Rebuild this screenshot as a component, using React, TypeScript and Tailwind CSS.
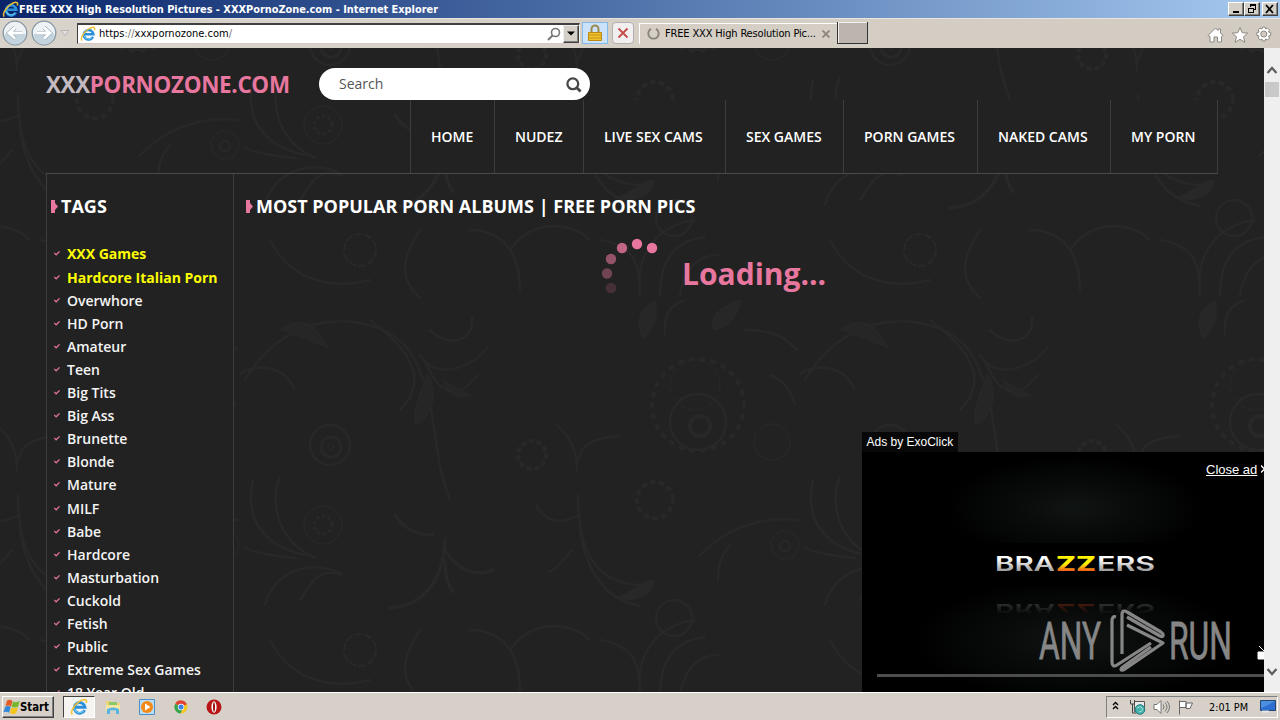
// src/App.tsx - Purpose: desktop with a browser window, the site page and the taskbar
import type { ReactNode } from "react";

const navItems = [
  { label: "HOME", width: "w-[84px]" },
  { label: "NUDEZ", width: "w-[89px]" },
  { label: "LIVE SEX CAMS", width: "w-[142px]" },
  { label: "SEX GAMES", width: "w-[118px]" },
  { label: "PORN GAMES", width: "w-[134px]" },
  { label: "NAKED CAMS", width: "w-[133px]" },
  { label: "MY PORN", width: "w-[108px] border-r" },
];

const tags = [
  "XXX Games",
  "Hardcore Italian Porn",
  "Overwhore",
  "HD Porn",
  "Amateur",
  "Teen",
  "Big Tits",
  "Big Ass",
  "Brunette",
  "Blonde",
  "Mature",
  "MILF",
  "Babe",
  "Hardcore",
  "Masturbation",
  "Cuckold",
  "Fetish",
  "Public",
  "Extreme Sex Games",
  "18 Year Old",
];

function IeLogo({ size }: { size: number }) {
  return (
    <svg width={size} height={size} viewBox="0 0 16 16" fill="none" className="shrink-0">
      <path d="M13 10.800A4.800 4.800 0 1 1 13.400 8.200H4.500" stroke="#2b8fd9" strokeWidth="2.500" />
      <path d="M12 11.500A4.600 4.600 0 0 1 4 9.500" stroke="#6fcbf5" strokeWidth="1" />
      <path d="M2.200 14.600C-.6 13 4.300 5.500 8.500 3 12 .8 15.600.2 14.500 4.300" stroke="#f2c230" strokeWidth="1.400" />
    </svg>
  );
}

function CaptionButton({ children }: { children: ReactNode }) {
  return (
    <div className="flex h-[14px] w-4 items-center justify-center border border-t-white border-l-white border-r-[#404040] border-b-[#404040] bg-[#d4d0c8] shadow-[inset_-1px_-1px_0_#808080]">
      <svg width="14" height="12" viewBox="0 0 14 12" fill="none" stroke="#000" shapeRendering="crispEdges" className="shrink-0">
        {children}
      </svg>
    </div>
  );
}

function TitleBar() {
  return (
    <div className="flex h-[18px] items-center bg-linear-to-r from-[#0a246a] to-[#a6caf0] pr-0.5 pl-0.5">
      <IeLogo size={17} />
      <svg width="430" height="18" className="shrink-0">
        <text x="0" y="13" textLength="419" lengthAdjust="spacingAndGlyphs" fill="#fff" className="font-['DejaVu_Sans_Condensed','DejaVu_Sans',sans-serif] text-[11px] font-bold">
          FREE XXX High Resolution Pictures - XXXPornoZone.com - Internet Explorer
        </text>
      </svg>
      <div className="ml-auto flex">
        <CaptionButton>
          <path d="M4 9h6" strokeWidth="2" />
        </CaptionButton>
        <CaptionButton>
          <path d="M5.500 4V1.500h5v5H9M5 2h6M3.500 5.500h5v4h-5zM3 5h6" />
        </CaptionButton>
        <div className="ml-0.5">
          <CaptionButton>
            <path d="M3 2l7 8M10 2l-7 8" strokeWidth="1.800" shapeRendering="auto" />
          </CaptionButton>
        </div>
      </div>
    </div>
  );
}

function HistoryButton({ back }: { back?: boolean }) {
  return (
    <svg width="26" height="26" viewBox="0 0 26 26" fill="none" className={back ? "" : "-scale-x-100"}>
      <circle cx="13" cy="13" r="11.800" fill="#eef2f5" stroke="#8495a4" strokeWidth="1.300" />
      <path d="M2.500 14a10.500 10.500 0 0 0 21 0z" fill="#c3d4df" />
      <path d="M20 13H8M13 7.500L7 13l6 5.500" stroke="#93a4b3" strokeWidth="4.200" />
      <path d="M20 13H8M13 7.500L7 13l6 5.500" stroke="#fff" strokeWidth="3" />
    </svg>
  );
}

function Toolbar() {
  return (
    <div className="flex h-[30px] items-center border-t border-[#e8e4de] bg-linear-to-r from-[#d8d3cb] to-[#d2cbc1] pb-px">
      <div className="flex w-[77px] items-center gap-[3px] pl-0.5">
        <HistoryButton back />
        <HistoryButton />
        <svg width="10" height="8" viewBox="0 0 10 8">
          <path d="M1 1.500h8L5 6.500z" fill="#e5e1e1" stroke="#bbb2b5" />
        </svg>
      </div>
      <div className="flex h-[21px] w-[503px] items-center border border-t-2 border-t-[#404040] border-l-[#404040] border-r-[#f5f3ef] border-b-[#d8c8c8] bg-white pl-0.5">
        <IeLogo size={16} />
        <svg width="150" height="17" className="ml-0.5">
          <text x="1" y="12" textLength="133" className="font-['DejaVu_Sans_Condensed','DejaVu_Sans',sans-serif] text-[11px]">
            <tspan fill="#000">https</tspan>
            <tspan fill="#777">://</tspan>
            <tspan fill="#000">xxxpornozone.com</tspan>
            <tspan fill="#777">/</tspan>
          </text>
        </svg>
        <svg width="14" height="14" viewBox="0 0 14 14" fill="none" stroke="#777" className="mr-0 ml-auto">
          <circle cx="8.500" cy="5.500" r="4" strokeWidth="1.600" />
          <path d="M5.500 8.500L1 13" strokeWidth="2" />
        </svg>
        <div className="ml-0.5 flex h-[18px] w-4 items-center justify-center border border-t-[#eee] border-l-[#eee] border-r-[#404040] border-b-[#404040] bg-[#d4d0c8] shadow-[inset_-1px_-1px_0_#808080]">
          <svg width="8" height="5" viewBox="0 0 8 5">
            <path d="M0 .5h8L4 4.500z" />
          </svg>
        </div>
      </div>
      <div className="ml-[2px] flex h-[22px] w-[26px] items-center justify-center border border-[#83b8ea] bg-[#cbe2fa]">
        <svg width="14" height="18" viewBox="0 0 14 18" fill="none">
          <path d="M3.500 9V5a3.500 3.500 0 0 1 7 0v4" stroke="#9c8a50" strokeWidth="2" />
          <path d="M.5 8.500h13v8H.5z" fill="#f0bf2a" stroke="#b98a14" />
          <path d="M1 11h12M1 14h12" stroke="#c2981c" />
        </svg>
      </div>
      <div className="ml-1 flex h-[22px] w-[22px] items-center justify-center rounded-sm border border-[#b3aeb0] bg-[#f2eff0]">
        <svg width="12" height="12" viewBox="0 0 12 12" stroke="#c34b48" strokeWidth="1.800">
          <path d="M1.500 1.500l9 9M10.500 1.500l-9 9" />
        </svg>
      </div>
      <div className="ml-[5px] flex h-[21px] w-[198px] items-center border-t border-l border-white pl-[7px]">
        <svg width="13" height="13" viewBox="0 0 13 13" fill="none" stroke="#8b857b" strokeWidth="1.900">
          <path d="M4 1.900a5.200 5.200 0 1 0 5 0" />
        </svg>
        <svg width="154" height="17" className="ml-[5px]">
          <text x="0" y="12" textLength="151" fill="#000" className="font-['DejaVu_Sans_Condensed','DejaVu_Sans',sans-serif] text-[11px]">
            FREE XXX High Resolution Pic...
          </text>
        </svg>
        <svg width="8" height="8" viewBox="0 0 8 8" stroke="#8b857b" strokeWidth="1.800" className="ml-[3px]">
          <path d="M.5.5l7 7M7.500.5l-7 7" />
        </svg>
      </div>
      <div className="h-[22px] w-[31px] border-r border-b border-l border-[#333] bg-[#bcb4ad] shadow-[inset_1px_1px_0_#f4f0ec]" />
      <svg width="66" height="18" viewBox="0 0 66 18" fill="#fff" stroke="#8d8984" className="mt-1 mr-[7px] ml-auto">
        <path d="M1 9.500L8.500 2l2.500 2.500V3h2.500v4l2.500 2.500-1.500 1V16h-4v-5h-3.500v5H3v-5.500z" />
        <path d="M33 1.500l2.200 5.200 5.600.4-4.300 3.700 1.400 5.500-4.900-3-4.900 3 1.400-5.500-4.300-3.700 5.600-.4z" />
        <path d="M55.500 1h2.600l.5 2 1.900-1 2 2-1 2 2.200.6v2.800l-2.200.6 1 2-2 2-1.900-1-.5 2h-2.600l-.5-2-2 1-1.900-2 1-2-2.300-.6V6.600l2.300-.6-1-2 1.900-2 2 1z" />
        <circle cx="56.800" cy="8" r="3" fill="#d2cbc1" />
      </svg>
    </div>
  );
}

// Faint floral wallpaper behind the page
function FloralBackdrop() {
  return (
    <svg width="1264" height="644" className="absolute inset-0" fill="none" stroke="#282828" strokeLinecap="round">
      <defs>
        <pattern id="floral" width="560" height="400" x="240" y="252" patternUnits="userSpaceOnUse">
          <path d="M5 80C50 0 150 10 175 60s15 90 35 140M130 20c40 30 60 60 30 90M180 55c15 25 50 15 68-8M185 60c15 40 35 38 53 15M190 30c20 20 45 10 42-13" strokeWidth="2" />
          <path d="M188 75c-10 20-16 44-12 50 16-8 22-30 12-50zM40 30c30-20 40 5 48 18M203 80c8 20 20 18 28 15" fill="#262626" />
          <circle cx="90" cy="145" r="20" strokeWidth="2" />
          <circle cx="91" cy="147" r="10" strokeDasharray="4 3" strokeWidth="3" />
          <circle cx="91" cy="147" r="3" />
          <circle cx="83" cy="225" r="19" />
          <circle cx="83" cy="225" r="9" strokeDasharray="1 5" strokeWidth="3" />
          <path d="M0 74c20-12 45-7 54 15M75 258c-40-18-45-60-35-80M65 255c-46-10-60-40-52-75M55 258c-40-4-50-10-50-10M25 305c10-35 45-45 75-32M60 300c20-35 30-27 42-25" strokeWidth="2" />
          <g transform="translate(22 0)">
            <path d="M315 170c0-28-14-38-20-45M316 160c6-20 20-22 40-24M316 195c0 60 20 90 65 90M318 230c8 50 30 70 60 76M316 215c-20 12-35 4-42-10M310 250c-10 10-15 20-24 22" strokeWidth="2" />
            <path d="M355 298c15 4 35 0 37-18-8 0-24 13-37 18z" fill="#282828" />
          </g>
          <path d="M205 240c-2 40-20 65-55 68M205 250c15 25 35 25 48 20M205 260c0 20 4 26 8 32M155 215c8 12 20 20 38 20" strokeWidth="3" />
          <circle cx="458" cy="122" r="28" strokeWidth="2" />
          <circle cx="460" cy="126" r="10" strokeDasharray="3 3" strokeWidth="4" />
          <circle cx="458" cy="105" r="46" strokeDasharray="2 9" strokeWidth="4" />
          <circle cx="455" cy="85" r="25" strokeDasharray="6 4" />
          <path d="M415 2c-15 5-20 20-12 36 10-8 16-20 12-36zM500 0c-15 5-32 14-26 30 14-3 24-12 26-30z" fill="#272727" />
          <path d="M425 35c-2-20 5-30 20-35M505 30c30 0 40 8 52 20M530 75c15 6 20 15 25 30M460 255c20-20 50-40 98-35M490 245c-10 12-12 22-12 35" strokeWidth="2" />
          <circle cx="532" cy="142" r="18" />
          <circle cx="545" cy="245" r="14" />
          <circle cx="545" cy="246" r="5" strokeWidth="2" />
          <circle cx="415" cy="200" r="18" strokeDasharray="2 7" strokeWidth="4" />
          <path d="M270 350c20-30 60-30 80-10M230 330c30 0 50 20 50 60M180 330c-20 30-20 50 0 68M30 340c20 40 60 50 100 40M400 395c-5-45 20-70 55-75M420 395c0-40 20-55 45-58M440 395c5-30 20-40 40-40M360 340c30 5 40 20 40 50" strokeWidth="2" />
          <circle cx="120" cy="350" r="16" strokeDasharray="6 4" strokeWidth="2" />
          <circle cx="434" cy="318" r="18" strokeWidth="2" />
          <circle cx="292" cy="155" r="14" strokeDasharray="2 6" strokeWidth="4" />
        </pattern>
      </defs>
      <rect width="1264" height="644" fill="url(#floral)" stroke="none" />
    </svg>
  );
}

function SectionHeading({ children }: { children: ReactNode }) {
  return (
    <h2 className="flex items-center text-[18px] leading-6 font-bold whitespace-nowrap text-white">
      <svg width="7" height="13" viewBox="0 0 7 13" fill="#e8779f" className="mr-[3px]">
        <path d="M0 0h4v3l3 3.500-3 3.500v3H0z" />
      </svg>
      {children}
    </h2>
  );
}

function Sidebar() {
  return (
    <aside className="w-[188px] shrink-0 border-x border-[#3d3d3d] bg-[#222] pt-[20px] pl-1">
      <SectionHeading>TAGS</SectionHeading>
      <ul className="mt-[24px] pl-[3px] text-[14px] font-semibold">
        {tags.map((tag, i) => (
          <li
            key={tag}
            className={
              i < 2
                ? "flex h-[23.400px] items-center gap-[7px] font-bold whitespace-nowrap text-[#ffff00]"
                : "flex h-[23.080px] items-center gap-[7px] whitespace-nowrap text-[#f4f4f4]"
            }
          >
            <svg width="6" height="5" viewBox="0 0 6 5" fill="none" stroke="#e8779f" strokeWidth="1.200">
              <path d="M.3 2l1.800 1.800L5.600.4" />
            </svg>
            {tag}
          </li>
        ))}
      </ul>
    </aside>
  );
}

function Spinner() {
  return (
    <svg width="60" height="60" viewBox="0 0 60 60" fill="#e8779f">
      <circle cx="52" cy="10" r="5.200" />
      <circle cx="37" cy="6" r="5.200" />
      <circle cx="22" cy="10" r="5.200" opacity=".8" />
      <circle cx="11" cy="21" r="5.200" opacity=".58" />
      <circle cx="7" cy="35.500" r="5.200" opacity=".4" />
      <circle cx="11" cy="50" r="5.200" opacity=".18" />
    </svg>
  );
}

function VideoAd() {
  return (
    <div className="absolute right-0 bottom-0 w-[402px] font-['Liberation_Sans',Arial,sans-serif] text-white">
      <div className="h-5 w-24 bg-[#080808] pl-[4.500px] text-[12px] leading-[20px] whitespace-nowrap">Ads by ExoClick</div>
      <div className="relative h-[240px] overflow-hidden bg-black">
        <svg width="402" height="240" viewBox="862 452 402 240" className="absolute inset-0">
          <defs>
            <radialGradient id="glow">
              <stop offset="0" stopColor="#101413" />
              <stop offset="1" stopColor="#000" />
            </radialGradient>
            <linearGradient id="silver" x1="0" y1="0" x2="0" y2="1">
              <stop offset=".3" stopColor="#fff" />
              <stop offset=".8" stopColor="#999" />
            </linearGradient>
            <linearGradient id="gold" x1="0" y1="0" x2="0" y2="1">
              <stop offset=".5" stopColor="#fff200" />
              <stop offset=".82" stopColor="#f04a20" />
            </linearGradient>
            <linearGradient id="fade" x1="0" y1="0" x2="0" y2="1">
              <stop offset=".2" stopColor="#fff" stopOpacity="0" />
              <stop offset="1" stopColor="#fff" stopOpacity=".4" />
            </linearGradient>
            <mask id="fadeMask" maskUnits="userSpaceOnUse" x="990" y="-618" width="170" height="19">
              <rect x="990" y="-618" width="170" height="19" fill="url(#fade)" />
            </mask>
          </defs>
          <ellipse cx="1075" cy="508" rx="130" ry="52" fill="url(#glow)" />
          <ellipse cx="1075" cy="640" rx="160" ry="62" fill="url(#glow)" />
          <rect x="983" y="543" width="185" height="44" fill="#000" />
          <g className="font-['Inter','Roboto',sans-serif] text-[20px] font-semibold">
            <text x="995" y="571" textLength="60" lengthAdjust="spacingAndGlyphs" fill="url(#silver)">BRA</text>
            <text x="1056" y="571" textLength="40" lengthAdjust="spacingAndGlyphs" fill="url(#gold)" className="font-extrabold">ZZ</text>
            <text x="1097" y="571" textLength="58" lengthAdjust="spacingAndGlyphs" fill="url(#silver)">ERS</text>
          </g>
          <g transform="scale(1 -1)" mask="url(#fadeMask)" aria-hidden="true" className="font-['Inter','Roboto',sans-serif] text-[20px] font-semibold">
            <text x="995" y="-604" textLength="60" lengthAdjust="spacingAndGlyphs" fill="#999">BRA</text>
            <text x="1056" y="-604" textLength="40" lengthAdjust="spacingAndGlyphs" fill="#f04a20">ZZ</text>
            <text x="1097" y="-604" textLength="58" lengthAdjust="spacingAndGlyphs" fill="#999">ERS</text>
          </g>
          <path d="M877 675.500h387" stroke="#4d4d4d" strokeWidth="3" />
          <path d="M1264 652h-6v7h6zM1259 646l5 5" fill="#fff" stroke="#fff" />
        </svg>
        <div className="absolute top-[10px] left-[344px] text-[13px] leading-4 whitespace-nowrap">
          <span className="underline">Close ad</span>
        </div>
        <svg width="6" height="8" viewBox="0 0 6 8" stroke="#fff" strokeWidth="1.300" className="absolute top-[13px] left-[399px]">
          <path d="M0 .5l7 7M7 .5l-7 7" />
        </svg>
        <Watermark />
      </div>
    </div>
  );
}

function Watermark() {
  return (
    <svg width="196" height="64" viewBox="1037 609 196 64" fill="none" className="absolute top-[157px] left-[175px]">
      <g fill="#868686" stroke="#868686" strokeWidth=".8" className="font-['Roboto','Liberation_Sans',sans-serif] text-[51px]">
        <text x="1039" y="659" textLength="62" lengthAdjust="spacingAndGlyphs">ANY</text>
        <text x="1169" y="659" textLength="63" lengthAdjust="spacingAndGlyphs">RUN</text>
      </g>
      <g stroke="#868686" strokeWidth="3.200" strokeLinejoin="round">
        <path d="M1116 617c-3-1-4 1-4 4v41c0 4 2 5 5 3l34-22" />
        <path d="M1122 654v-39c0-4 2-5 5-3l34 20c3 2 3 6-1 4l-33-19" />
        <path d="M1127 625l36 18-38 26c-4 3-6 0-1-3l27-19" />
      </g>
    </svg>
  );
}

function ScrollBar() {
  return (
    <div className="flex w-4 flex-col items-center bg-[#efefef] pt-[18px] pb-4">
      <svg width="12" height="8" viewBox="0 0 12 8" fill="none" stroke="#5d5d5d" strokeWidth="2.200">
        <path d="M1.500 7L6 2l4.500 5" />
      </svg>
      <div className="mt-2 h-[15px] w-[14px] bg-[#c9c9c9]" />
      <svg width="12" height="8" viewBox="0 0 12 8" fill="none" stroke="#5d5d5d" strokeWidth="2.200" className="mt-auto">
        <path d="M1.500 1L6 6l4.500-5" />
      </svg>
    </div>
  );
}

function SitePage() {
  return (
    <div className="relative flex w-[1264px] flex-col overflow-hidden bg-[#222] font-['Open_Sans',sans-serif]">
      <FloralBackdrop />
      <header className="relative mx-[46px] flex h-[52px] shrink-0 items-end">
        <svg width="250" height="34" className="mr-[23px]">
          <text x="0" y="26.500" textLength="244" className="text-[22.400px] font-bold">
            <tspan fill="#c3b9c0">XXX</tspan>
            <tspan fill="#e8779f">PORNOZONE.COM</tspan>
          </text>
        </svg>
        <div className="flex h-8 w-[271px] items-center justify-between rounded-full bg-white pr-[8px] pl-5 text-[14px] text-[#555]">
          <span className="pb-0.5">Search</span>
          <svg width="16" height="16" viewBox="0 0 16 16" fill="none" stroke="#484848" className="mt-0.5">
            <circle cx="6.800" cy="6.800" r="5.400" strokeWidth="2.300" />
            <path d="M10.800 10.800l3.800 3.800" strokeWidth="2.800" />
          </svg>
        </div>
      </header>
      <nav className="relative ml-[410px] flex h-[73px] w-[808px] shrink-0 bg-[#222]">
        {navItems.map((item) => (
          <div
            key={item.label}
            className={`${item.width} flex shrink-0 items-center border-l border-[#3d3d3d] pl-5 text-[14px] font-semibold whitespace-nowrap text-white`}
          >
            {item.label}
          </div>
        ))}
      </nav>
      <main className="relative ml-[46px] flex w-[1172px] grow border-t border-[#4a4a4a]">
        <Sidebar />
        <section className="grow pt-[20px] pl-3">
          <SectionHeading>MOST POPULAR PORN ALBUMS | FREE PORN PICS</SectionHeading>
          <div className="mt-5 flex pl-[354px]">
            <Spinner />
            <div className="ml-[22px] pt-[14px] text-[30px] leading-[44px] font-bold text-[#e8779f]">Loading...</div>
          </div>
        </section>
      </main>
      <VideoAd />
    </div>
  );
}

function TaskBar() {
  return (
    <footer className="flex h-7 items-center border-t border-white bg-[#d6d0c8] pl-0.5">
      <div className="flex h-[22px] w-[52px] items-center border border-t-white border-l-white border-r-[#404040] border-b-[#404040] shadow-[inset_-1px_-1px_0_#808080]">
        <svg width="17" height="16" viewBox="0 0 17 16" className="shrink-0">
          <path d="M4 1.500q3-1.500 5.500.5L8 7.500q-2-1.500-5.500-.5z" fill="#e45b26" />
          <path d="M10.200 2.500q3 1.500 6.500-.5L15 7.700q-3 1.500-6.500 0z" fill="#76b82b" />
          <path d="M2.200 7.800q3.200-1.500 5.500.3L6 13.700q-2-1.500-5.500-.5z" fill="#3288d8" />
          <path d="M8.400 8.600q3 1.500 6.500 0l-1.600 5.600q-3 1.500-6.500 0z" fill="#f5c51e" />
        </svg>
        <svg width="31" height="18">
          <text x="0" y="13" textLength="29" lengthAdjust="spacingAndGlyphs" className="font-['DejaVu_Sans_Condensed','DejaVu_Sans',sans-serif] text-[11.500px] font-bold">
            Start
          </text>
        </svg>
      </div>
      <div className="ml-[9px] flex h-[22px] w-8 items-center justify-center border border-t-[#404040] border-l-[#404040] border-r-white border-b-white bg-[#f6f4f1]">
        <IeLogo size={18} />
      </div>
      <svg width="16" height="16" viewBox="0 0 16 16" className="ml-[10px]">
        <path d="M1 2h5l1 2h8v7H1z" fill="#eed475" />
        <path d="M4 3h8v3H4z" fill="#8bc86a" />
        <path d="M1 6h14v6H1z" fill="#f7e7a2" />
        <path d="M2 10q6-3 12 0v5h-3v-3.500H5V15H2z" fill="#58b4e5" />
      </svg>
      <svg width="16" height="16" viewBox="0 0 16 16" className="ml-[18px]">
        <path d="M.5.500h15v15H.500z" fill="#bcdcf4" stroke="#4a8fcb" />
        <circle cx="8" cy="8" r="6" fill="#f18a16" />
        <path d="M6 4.500v7L11.500 8z" fill="#fff" />
      </svg>
      <svg width="14" height="14" viewBox="0 0 14 14" className="ml-[19px]">
        <circle cx="7" cy="7" r="6.500" fill="#f4c720" />
        <path d="M7 7L1.300 3.700A6.500 6.500 0 0 1 12.900 4.200z" fill="#df4234" />
        <path d="M7 7L1.300 3.700A6.500 6.500 0 0 0 6.500 13.500L9 8z" fill="#35a352" />
        <circle cx="7" cy="7" r="3.200" fill="#fff" />
        <circle cx="7" cy="7" r="2.500" fill="#3d7fe8" />
      </svg>
      <svg width="16" height="16" viewBox="0 0 16 16" className="ml-[18px]">
        <circle cx="8" cy="8" r="7.500" fill="#b81515" />
        <ellipse cx="8" cy="8" rx="2.600" ry="5.800" fill="#fff" />
        <ellipse cx="8" cy="8" rx="1" ry="4.800" fill="#9c1111" />
      </svg>
      <div className="mr-0.5 ml-auto flex h-[22px] w-[172px] items-center border border-t-[#808080] border-l-[#808080] border-r-white border-b-white">
        <svg width="7" height="9" viewBox="0 0 7 9" fill="none" stroke="#000" strokeWidth="1.300" className="mb-0.5 ml-[5px]">
          <path d="M1 4l2.500-2.500L6 4M1 8l2.500-2.500L6 8" />
        </svg>
        <svg width="17" height="16" viewBox="0 0 17 16" fill="none" className="ml-[10px]">
          <path d="M5.500 2.500h10v10h-10z" fill="#e9e9e9" stroke="#555" />
          <path d="M1.500 1v4h4V1M3.500 5v9h4" stroke="#444" />
          <circle cx="11" cy="10.500" r="4.800" fill="#45b1ad" stroke="#267b80" />
          <path d="M8 9q3-3 5 0t-3 4" stroke="#a8e2d4" />
        </svg>
        <svg width="17" height="16" viewBox="0 0 17 16" fill="none" stroke="#777" className="ml-[7px]">
          <path d="M1 5.500h3l4-4v13l-4-4H1z" fill="#fff" />
          <path d="M10 5.500q2 2.500 0 5M12 3.500q4 4.500 0 9M14 2q5 6 0 12" />
        </svg>
        <svg width="17" height="16" viewBox="0 0 17 16" fill="#fff" stroke="#666" className="ml-[7px]">
          <path d="M2.500 15.500V1.500M3 2.500h6v6H3M9 4h6.500L13 9.500H9z" />
        </svg>
        <svg width="41" height="16" className="ml-[15px]">
          <text x="0" y="12" textLength="39" lengthAdjust="spacingAndGlyphs" className="font-['DejaVu_Sans_Condensed','DejaVu_Sans',sans-serif] text-[11px]">
            2:01 PM
          </text>
        </svg>
        <svg width="16" height="13" viewBox="0 0 16 13" className="ml-[10px]">
          <path d="M.5.500h15v10H.500z" fill="#2c6fd0" stroke="#24456f" />
          <path d="M1 1h14L6 6 1 8z" fill="#4d8fdf" />
          <path d="M2 11.500h7" stroke="#dfe8f3" strokeWidth="2" />
        </svg>
      </div>
    </footer>
  );
}

export default function App() {
  return (
    <div className="flex h-[720px] w-[1280px] flex-col overflow-hidden bg-[#222]">
      <TitleBar />
      <Toolbar />
      <div className="flex h-[644px]">
        <SitePage />
        <ScrollBar />
      </div>
      <TaskBar />
    </div>
  );
}
